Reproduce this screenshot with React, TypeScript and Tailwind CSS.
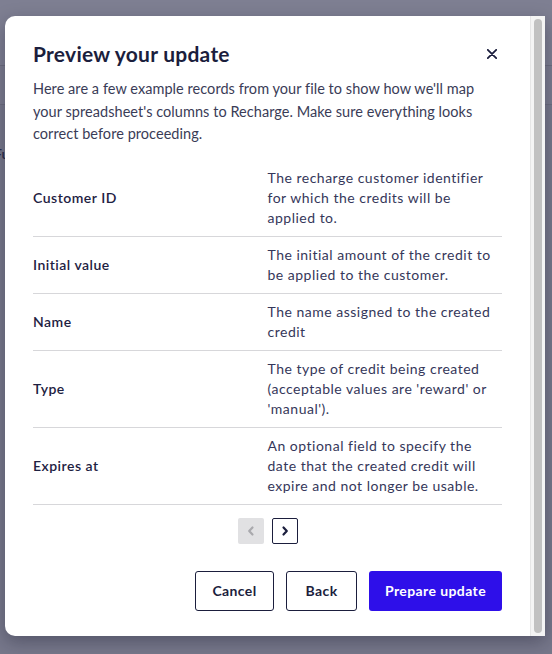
import React from "react";

const rows = [
  { label: "Customer ID", desc: "The recharge customer identifier for which the credits will be applied to." },
  { label: "Initial value", desc: "The initial amount of the credit to be applied to the customer." },
  { label: "Name", desc: "The name assigned to the created credit" },
  { label: "Type", desc: "The type of credit being created (acceptable values are 'reward' or 'manual')." },
  { label: "Expires at", desc: "An optional field to specify the date that the created credit will expire and not longer be usable." },
];

export default function App() {
  return (
    <div className="relative w-[552px] h-[654px] overflow-hidden bg-[#77788b] font-['Lato',sans-serif]">
      {/* underlying page, dimmed */}
      <div className="h-[66px] border-b border-[#6d6e80] bg-[#7e7f92]" />
      <div className="h-[39px] border-b border-[#6d6e80] bg-[#7b7c8f]" />
      <div className="pt-[38px] text-[14px] font-semibold text-[#2a2c4a] -ml-[6px]">Fun</div>

      {/* modal */}
      <div className="absolute left-[5px] top-[16px] w-[540px] h-[620px] flex bg-white rounded-l-[10px] overflow-hidden shadow-[0_6px_18px_rgba(20,20,40,0.35)]">
        <div className="flex-1 px-[28px] pt-[25px]">
          <div className="flex items-center justify-between h-[26px]">
            <h2 className="text-[21px] font-bold text-[#1b1e3d] tracking-[0.25px]">Preview your update</h2>
            <svg width="10" height="10" viewBox="0 0 10 10" className="mr-[5px]">
              <path d="M0.8 0.8 L9.2 9.2 M9.2 0.8 L0.8 9.2" stroke="#1b1e3d" strokeWidth="1.8" strokeLinecap="round" />
            </svg>
          </div>
          <p className="mt-[11px] text-[14.5px] leading-[22.5px] text-[#3a3c57] tracking-[0.05px]">
            Here are a few example records from your file to show how we'll map your spreadsheet's columns to Recharge. Make sure everything looks correct before proceeding.
          </p>
          <div className="mt-[14px]">
            {rows.map((r) => (
              <div key={r.label} className="grid grid-cols-2 items-center py-[8px] border-b border-[#d7d7da]">
                <div className="text-[14px] font-semibold text-[#1e2142] tracking-[0.5px]">{r.label}</div>
                <div className="text-[14px] leading-[20px] text-[#35375a] tracking-[0.5px]">{r.desc}</div>
              </div>
            ))}
          </div>
          <div className="flex justify-center gap-[8px] mt-[13px]">
            <div className="w-[26px] h-[26px] rounded-[2px] bg-[#e1e1e3] flex items-center justify-center">
              <svg width="10" height="12" viewBox="0 0 10 12">
                <path d="M6.5 2.5 L3.2 6 L6.5 9.5" fill="none" stroke="#a9a9ad" strokeWidth="2.2" strokeLinecap="round" strokeLinejoin="round" />
              </svg>
            </div>
            <div className="w-[26px] h-[26px] rounded-[2px] border border-[#1b1e3d] flex items-center justify-center">
              <svg width="10" height="12" viewBox="0 0 10 12">
                <path d="M3.5 2.5 L6.8 6 L3.5 9.5" fill="none" stroke="#1b1e3d" strokeWidth="2.2" strokeLinecap="round" strokeLinejoin="round" />
              </svg>
            </div>
          </div>
          <div className="flex justify-end gap-[12px] mt-[27px]">
            <button className="h-[40px] w-[79px] rounded-[3px] border border-[#1b1e3d] text-[14px] font-bold text-[#1b1e3d] tracking-[0.4px]">Cancel</button>
            <button className="h-[40px] w-[71px] rounded-[3px] border border-[#1b1e3d] text-[14px] font-bold text-[#1b1e3d] tracking-[0.4px]">Back</button>
            <button className="h-[40px] w-[133px] rounded-[3px] bg-[#2e0fe9] text-[14px] font-bold text-white tracking-[0.4px]">Prepare update</button>
          </div>
        </div>
        {/* scrollbar */}
        <div className="w-[15px] bg-[#f4f4f4] border-l border-[#e6e6e6] px-[3px] py-[3px]">
          <div className="h-full rounded-full bg-[#c1c1c1]" />
        </div>
      </div>
    </div>
  );
}
